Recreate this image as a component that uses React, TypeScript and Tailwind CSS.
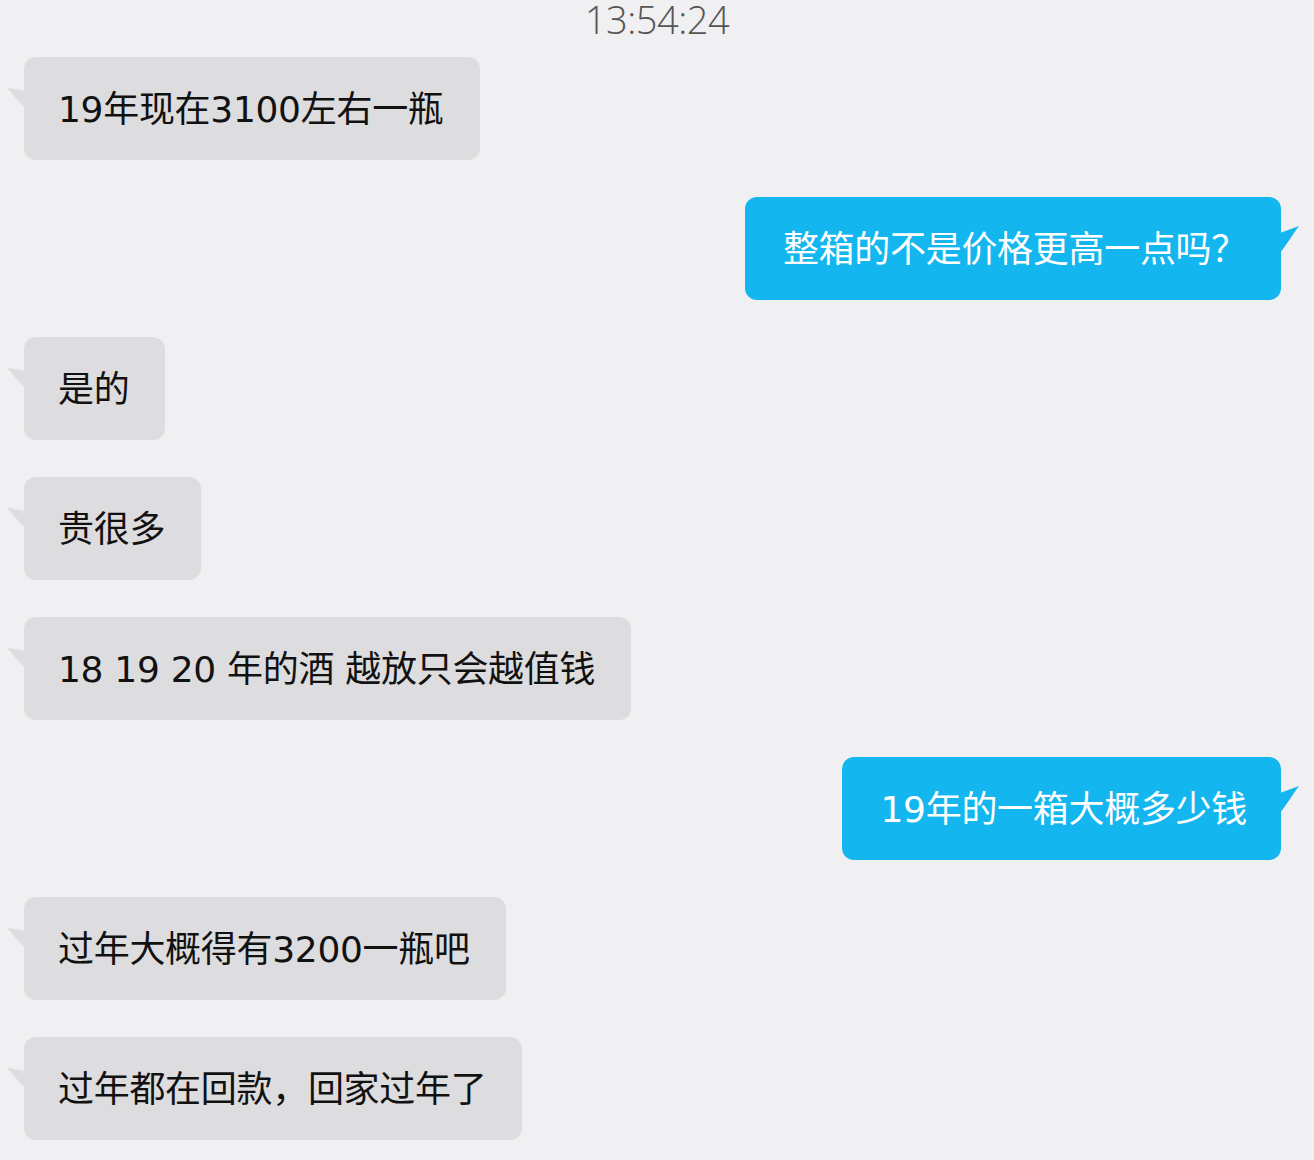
const messages: { mine: boolean; text: string }[] = [
  { mine: false, text: "19年现在3100左右一瓶" },
  { mine: true, text: "整箱的不是价格更高一点吗？" },
  { mine: false, text: "是的" },
  { mine: false, text: "贵很多" },
  { mine: false, text: "18 19 20 年的酒 越放只会越值钱" },
  { mine: true, text: "19年的一箱大概多少钱" },
  { mine: false, text: "过年大概得有3200一瓶吧" },
  { mine: false, text: "过年都在回款，回家过年了" },
]

function Bubble({ mine, text }: { mine: boolean; text: string }) {
  if (mine) {
    return (
      <div className="flex justify-end pr-[33px]">
        <div className="relative h-[103px] flex items-center rounded-xl bg-[#13b6ef] pl-[38px] pr-[34px] pt-[2px] text-white">
          <span className="text-[36px] leading-none tracking-[-0.3px]">{text}</span>
          <svg className="absolute right-[-19px] top-[28px]" width="20" height="30" viewBox="0 0 20 30">
            <path d="M0 8 L19 1 C 13 9 7 19 0 28 Z" fill="#13b6ef" />
          </svg>
        </div>
      </div>
    )
  }
  return (
    <div className="flex justify-start pl-[24px]">
      <div className="relative h-[103px] flex items-center rounded-xl bg-[#dddcde] pl-[34px] pr-[36px] pt-[2px] text-[#111]">
        <span className="text-[36px] leading-none tracking-[-0.3px]">{text}</span>
        <svg className="absolute left-[-18px] top-[30px]" width="19" height="22" viewBox="0 0 19 22">
          <path d="M19 4 L1 0.5 C 7 8 13 15 19 21 Z" fill="#dddcde" />
        </svg>
      </div>
    </div>
  )
}

export default function App() {
  return (
    <div className="w-[1314px] h-[1160px] overflow-hidden bg-[#f0eff1] font-['DejaVu_Sans','Noto_Sans_CJK_SC',sans-serif]">
      <div className="h-[57px] flex justify-center">
        <span className="text-[38px] leading-[38px] font-light text-[#555] tracking-[-0.5px] font-['Open_Sans',sans-serif]">
          13:54:24
        </span>
      </div>
      <div className="flex flex-col gap-[37px]">
        {messages.map((m, i) => (
          <Bubble key={i} mine={m.mine} text={m.text} />
        ))}
      </div>
    </div>
  )
}
